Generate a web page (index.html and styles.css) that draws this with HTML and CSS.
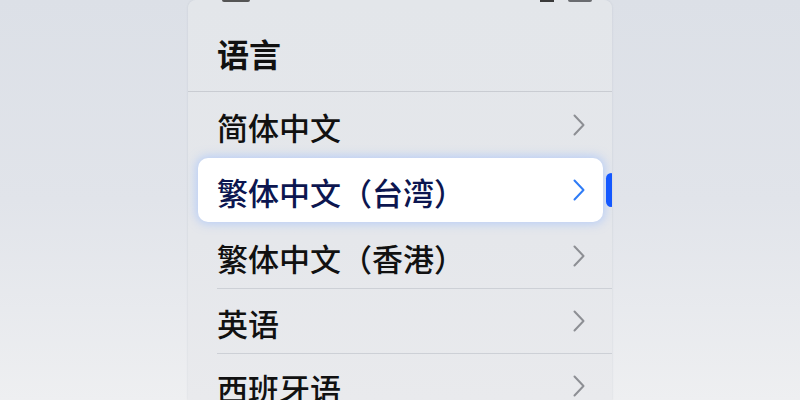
FILE: index.html
```html
<!DOCTYPE html>
<html lang="zh">
<head>
<meta charset="utf-8">
<link rel="stylesheet" href="styles.css">
</head>
<body>
<div class="panel">
  <div class="status">
    <span class="time"></span>
    <span class="icons"><span class="signal"></span><span class="battery"></span></span>
  </div>
  <div class="title">语言</div>
  <div class="list">
    <div class="row"><span class="label">简体中文</span><svg class="chev" viewBox="0 0 12 22"><polyline points="1.5,1.5 10.5,11 1.5,20.5"/></svg></div>
    <div class="row selected"><span class="label">繁体中文（台湾）</span><svg class="chev" viewBox="0 0 12 22"><polyline points="1.5,1.5 10.5,11 1.5,20.5"/></svg></div>
    <div class="row"><span class="label">繁体中文（香港）</span><svg class="chev" viewBox="0 0 12 22"><polyline points="1.5,1.5 10.5,11 1.5,20.5"/></svg></div>
    <div class="row divided"><span class="label">英语</span><svg class="chev" viewBox="0 0 12 22"><polyline points="1.5,1.5 10.5,11 1.5,20.5"/></svg></div>
    <div class="row divided"><span class="label">西班牙语</span><svg class="chev" viewBox="0 0 12 22"><polyline points="1.5,1.5 10.5,11 1.5,20.5"/></svg></div>
  </div>
  <div class="scroll"></div>
</div>
</body>
</html>
```
FILE: styles.css
```css
html, body {
  margin: 0;
  height: 100%;
}
body {
  width: 800px;
  height: 400px;
  overflow: hidden;
  background: linear-gradient(180deg, #dce0e7 0%, #e1e4ea 50%, #eeeff1 100%);
  display: flex;
  justify-content: center;
  font-family: "Noto Sans CJK SC", "Noto Sans", sans-serif;
}
.panel {
  position: relative;
  width: 424px;
  height: 400px;
  overflow: hidden;
  background: linear-gradient(180deg, #e3e6ea 0%, #e5e7eb 60%, #e9eaed 100%);
  border-top-right-radius: 8px;
  border-top-left-radius: 8px;
  box-shadow: 0 0 2px rgba(150, 155, 165, 0.35);
}
.status {
  height: 12px;
  display: flex;
  justify-content: space-between;
  align-items: flex-start;
  padding: 0 20px 0 34px;
  overflow: hidden;
}
.time {
  width: 28px;
  height: 2px;
  background: #555;
  border-radius: 0 0 2px 2px;
}
.icons {
  display: flex;
  gap: 14px;
  align-items: flex-start;
}
.signal {
  width: 14px;
  height: 2px;
  background: #3a3a3a;
}
.battery {
  width: 24px;
  height: 2px;
  background: #6a6c70;
  border-radius: 0 0 2px 2px;
}
.title {
  height: 80px;
  display: flex;
  align-items: center;
  padding-left: 29px;
  padding-top: 2px;
  box-sizing: border-box;
  font-size: 32px;
  font-weight: 700;
  color: #111;
  border-bottom: 1px solid #c9ccd2;
}
.list {
  display: flex;
  flex-direction: column;
}
.row {
  height: 65px;
  flex-shrink: 0;
  display: flex;
  align-items: center;
  justify-content: space-between;
  padding: 0 27px 0 29px;
  box-sizing: border-box;
  position: relative;
}
.row.divided::before {
  content: "";
  position: absolute;
  left: 29px;
  right: 0;
  top: 0;
  border-top: 1px solid #cdd0d6;
}
.label {
  font-size: 31px;
  font-weight: 500;
  color: #111;
  line-height: 1;
  padding-top: 3px;
}
.chev {
  width: 12px;
  height: 22px;
  fill: none;
  stroke: #8d8f94;
  stroke-width: 2;
  stroke-linecap: round;
  stroke-linejoin: round;
}
.selected {
  margin: 1px 9px 1px 10px;
  height: 64px;
  padding: 0 18px 0 19px;
  background: #ffffff;
  border-radius: 10px;
  box-shadow: 0 0 10px 2px rgba(150, 185, 255, 0.55);
}
.selected .label {
  color: #0c1650;
}
.selected .chev {
  stroke: #2f7cf6;
}
.scroll {
  position: absolute;
  right: 0;
  top: 173px;
  width: 6px;
  height: 34px;
  background: #1458ff;
  border-radius: 6px 1px 1px 6px;
}
```
